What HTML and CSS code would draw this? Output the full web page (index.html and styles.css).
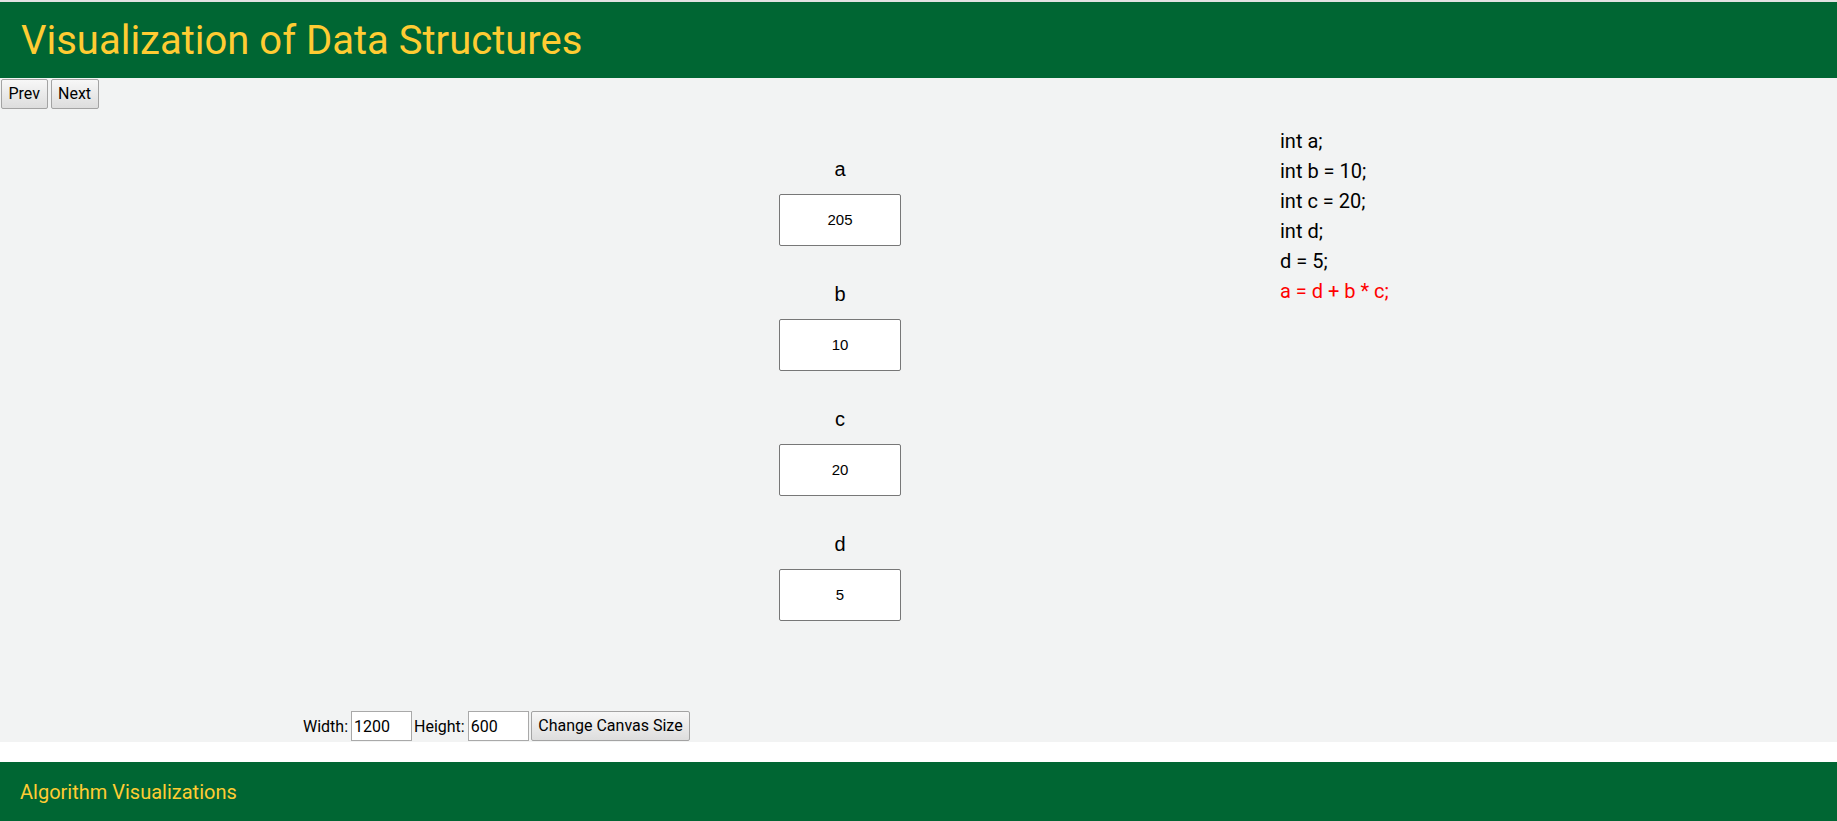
FILE: index.html
```html
<!DOCTYPE html>
<html lang="en">
<head>
<meta charset="utf-8">
<title>Visualization of Data Structures</title>
<link rel="stylesheet" href="styles.css">
</head>
<body>
<header class="site-header">
  <h1 class="site-title">Visualization of Data Structures</h1>
</header>
<main class="main">
  <div class="nav-row">
    <button class="btn btn-nav">Prev</button>
    <button class="btn btn-nav">Next</button>
  </div>
  <div class="stage">
    <div class="vars">
      <div class="var">
        <div class="var-name">a</div>
        <div class="var-box">205</div>
      </div>
      <div class="var">
        <div class="var-name">b</div>
        <div class="var-box">10</div>
      </div>
      <div class="var">
        <div class="var-name">c</div>
        <div class="var-box">20</div>
      </div>
      <div class="var">
        <div class="var-name">d</div>
        <div class="var-box">5</div>
      </div>
    </div>
    <div class="code">
      <div class="code-line">int a;</div>
      <div class="code-line">int b = 10;</div>
      <div class="code-line">int c = 20;</div>
      <div class="code-line">int d;</div>
      <div class="code-line">d = 5;</div>
      <div class="code-line current">a = d + b * c;</div>
    </div>
  </div>
  <div class="controls">
    <label class="ctl-label">Width:</label>
    <input class="ctl-input" type="text" value="1200">
    <label class="ctl-label">Height:</label>
    <input class="ctl-input" type="text" value="600">
    <button class="btn btn-change">Change Canvas Size</button>
  </div>
</main>
<div class="spacer"></div>
<footer class="site-footer">
  <span class="footer-text">Algorithm Visualizations</span>
</footer>
</body>
</html>
```

FILE: styles.css
```css
* { box-sizing: border-box; }

html, body {
  margin: 0;
  padding: 0;
  background: #ffffff;
  font-family: Roboto, "Liberation Sans", Arial, sans-serif;
}

body {
  border-top: 2px solid #e2e2e2;
}

.site-header {
  background: #006633;
  height: 76px;
  display: flex;
  align-items: center;
  padding-left: 21px;
}

.site-title {
  margin: 0;
  font-family: Roboto, sans-serif;
  font-weight: 400;
  font-size: 40px;
  line-height: 47px;
  color: #ffcc33;
}

.main {
  background: #f2f3f3;
  padding: 1px 0 1px 0;
}

.nav-row {
  display: flex;
  gap: 3px;
  padding-left: 1px;
  height: 30px;
}

.btn {
  font-family: Roboto, sans-serif;
  font-size: 16px;
  line-height: 18px;
  height: 30px;
  padding: 0 7px;
  color: #000;
  background: linear-gradient(#f7f7f7, #dddddd);
  border: 1px solid #a3a3a3;
  border-radius: 2px;
  margin: 0;
}

.btn-nav {
  padding: 0 6.5px;
}

.stage {
  height: 602px;
  display: flex;
  align-items: flex-start;
}

.vars {
  margin-left: 779px;
  margin-top: 49px;
  width: 122px;
  display: flex;
  flex-direction: column;
  gap: 37px;
}

.var {
  display: flex;
  flex-direction: column;
  align-items: center;
  gap: 13px;
}

.var-name {
  font-family: "Liberation Sans", Arial, sans-serif;
  font-size: 20px;
  line-height: 23px;
  color: #000;
}

.var-box {
  width: 122px;
  height: 52px;
  padding-bottom: 2px;
  background: #ffffff;
  border: 1px solid #777777;
  border-radius: 2px;
  display: flex;
  align-items: center;
  justify-content: center;
  font-family: "Liberation Sans", Arial, sans-serif;
  font-size: 15px;
  color: #000;
}

.code {
  margin-left: 379px;
  margin-top: 17px;
  font-family: Roboto, sans-serif;
  font-size: 20px;
  line-height: 30px;
  color: #000;
}

.code-line.current {
  color: #ff0000;
}

.controls {
  display: flex;
  align-items: center;
  gap: 3px;
  height: 30px;
  padding-left: 303px;
}

.ctl-label {
  font-family: Roboto, sans-serif;
  font-size: 16px;
  color: #000;
}

.ctl-label + .ctl-input {
  margin-left: 0;
}

.ctl-input + .ctl-label {
  margin-left: -1px;
}

.ctl-input {
  width: 61px;
  height: 30px;
  padding: 0 2px;
  margin: 0;
  border: 1px solid #a9a9a9;
  background: #fff;
  font-family: Roboto, sans-serif;
  font-size: 16px;
  color: #000;
}

.btn-change {
  margin-left: -1px;
  padding: 0 6.5px;
}

.spacer {
  height: 20px;
  background: #ffffff;
}

.site-footer {
  background: #006633;
  height: 59px;
  display: flex;
  align-items: center;
  padding-left: 20px;
}

.footer-text {
  font-family: Roboto, sans-serif;
  font-size: 20px;
  color: #ffcc33;
}
```
